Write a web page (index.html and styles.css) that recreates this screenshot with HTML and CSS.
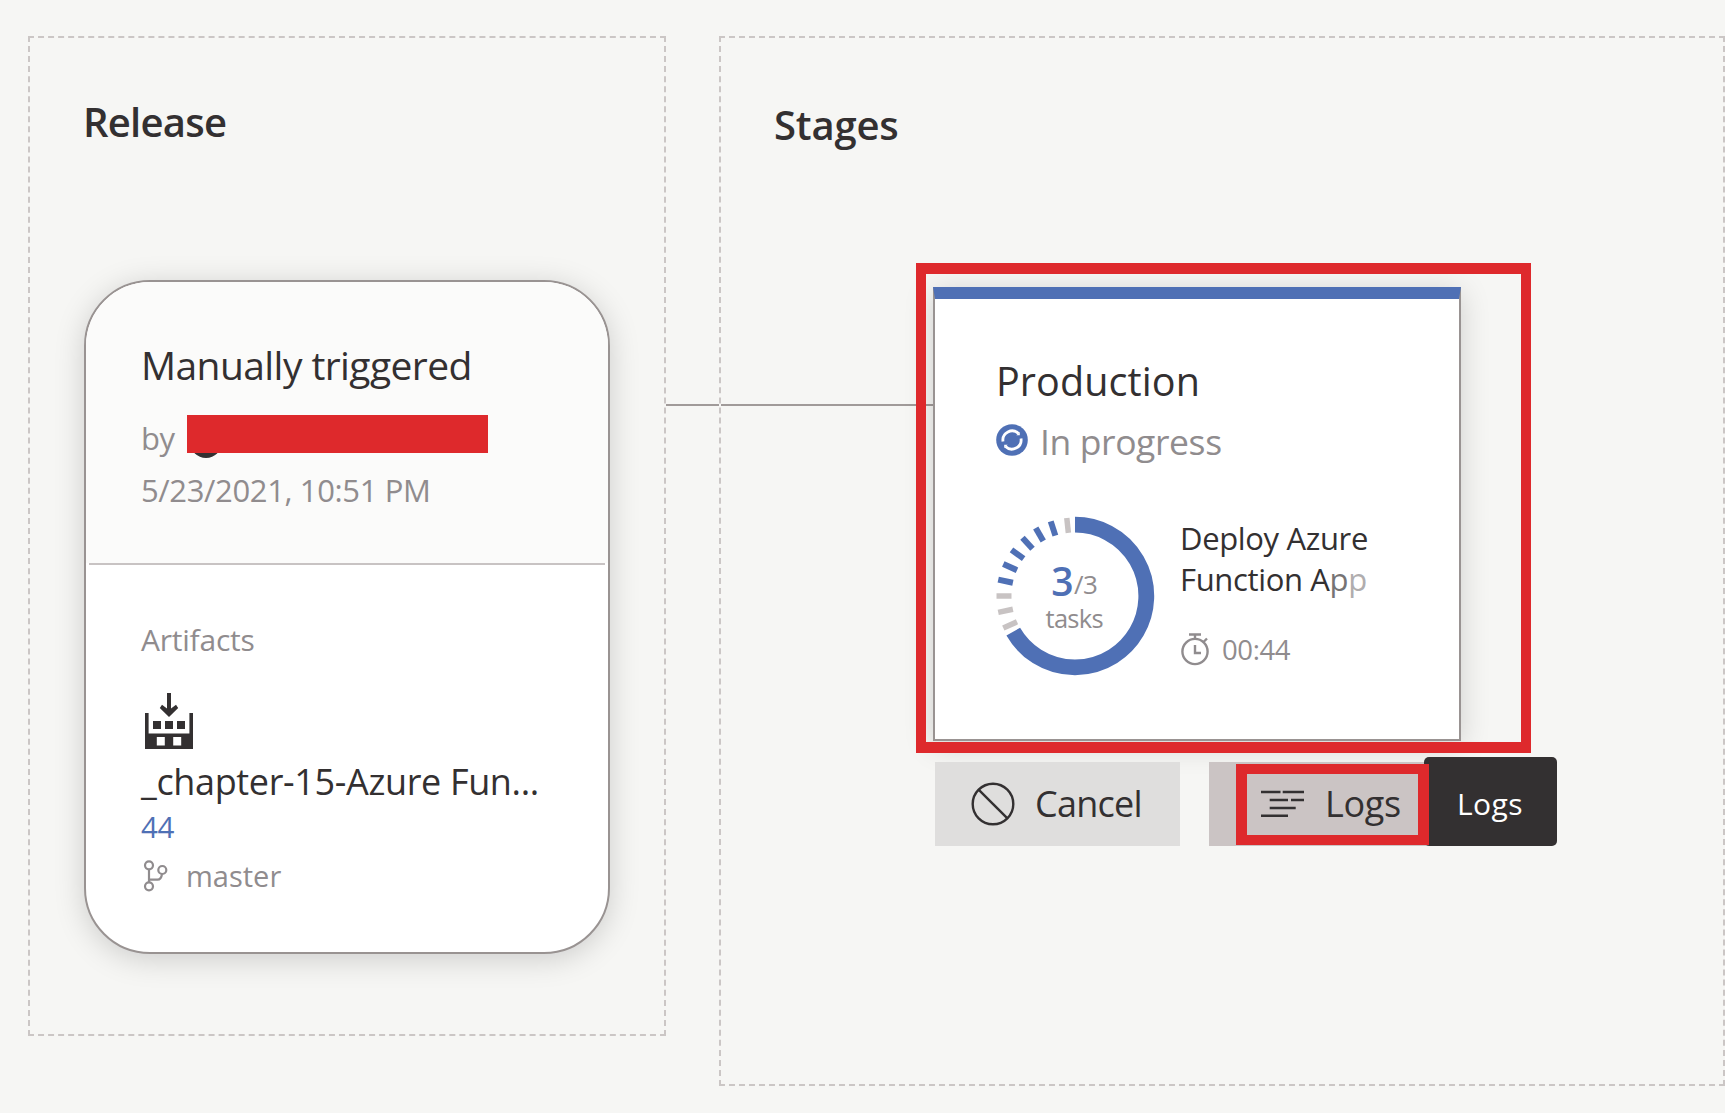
FILE: index.html
```html
<!DOCTYPE html>
<html lang="en">
<head>
<meta charset="utf-8">
<title>Release pipeline</title>
<link rel="stylesheet" href="styles.css">
</head>
<body>
<main class="pipeline">
  <section class="panel release">
    <h2 class="panel-title release-title">Release</h2>
    <article class="release-card">
      <div class="trigger">
        <h3 class="trigger-title">Manually triggered</h3>
        <div class="author"><span>by</span><span class="author-name"><i class="avatar"></i><i class="redaction"></i></span></div>
        <div class="date">5/23/2021, 10:51 PM</div>
      </div>
      <hr class="divider">
      <div class="artifacts">
        <div class="artifacts-label">Artifacts</div>
        <svg class="build-icon" width="48" height="56" viewBox="0 0 48 56">
          <path d="M0 20h3.6v20.5h40.8V20H48v36H0zM11.8 44v8.5h8V44zM28.2 44v8.5h8V44z" fill="#333031" fill-rule="evenodd"/>
          <path d="M8 28h8v8H8zM20 28h8v8h-8zM32 28h8v8h-8z" fill="#333031"/>
          <path d="M22 0h4v15.500l5-3.700 2.200 3.200L24 24l-9.200-9 2.200-3.200 5 3.700z" fill="#333031"/>
        </svg>
        <div class="artifact-name">_chapter-15-Azure Fun...</div>
        <a class="artifact-version">44</a>
        <div class="branch">
          <svg width="26" height="34" viewBox="0 0 26 34" fill="none" stroke="#908c8e" stroke-width="2.200">
            <circle cx="6" cy="6.300" r="4"/><circle cx="19.300" cy="11" r="4"/><circle cx="6" cy="27.300" r="4"/>
            <path d="M6 10.300v13M6 20.700h8.500c3 0 4-2 4.500-5.700"/>
          </svg>
          <span>master</span>
        </div>
      </div>
    </article>
  </section>
  <div class="link outer-link"></div>
  <section class="panel stages">
    <h2 class="panel-title stages-title">Stages</h2>
    <div class="stage-row">
      <div class="link inner-link"></div>
      <article class="stage-card">
        <h3 class="stage-title">Production</h3>
        <div class="status">
          <svg width="32" height="32" viewBox="0 0 32 32">
            <circle cx="16" cy="16" r="15.800" fill="#4f70b5"/>
            <g fill="none" stroke="#fff" stroke-width="2.800"><path d="M7 17.500A9.200 9.200 0 0 1 22.500 9.500"/><path d="M25 14.500A9.200 9.200 0 0 1 9.500 22.500"/></g>
            <path d="M23.800 8v3.300h-3.500zM8.200 24v-3.300h3.500z" fill="#fff"/>
          </svg>
          <span>In progress</span>
        </div>
        <div class="progress">
          <svg class="ring" width="160" height="160" viewBox="0 0 160 160">
            <path d="M80 8.700A71.300 71.300 0 1 1 18.250 115.650" fill="none" stroke="#4f70b5" stroke-width="15.800"/>
            <g stroke="#c8c3c3" stroke-width="5.500">
              <path d="M80 1.500v15" transform="rotate(-6 80 80)"/>
              <path d="M80 1.500v15" transform="rotate(-90 80 80)"/>
              <path d="M80 1.500v15" transform="rotate(-102 80 80)"/>
              <path d="M80 1.500v15" transform="rotate(-114 80 80)"/>
            </g>
            <g stroke="#4f70b5" stroke-width="6">
              <path d="M80 1.500v15" transform="rotate(-18 80 80)"/>
              <path d="M80 1.500v15" transform="rotate(-30 80 80)"/>
              <path d="M80 1.500v15" transform="rotate(-42 80 80)"/>
              <path d="M80 1.500v15" transform="rotate(-54 80 80)"/>
              <path d="M80 1.500v15" transform="rotate(-66 80 80)"/>
              <path d="M80 1.500v15" transform="rotate(-78 80 80)"/>
            </g>
            <text class="ring-done" x="56.300" y="80">3</text>
            <text class="ring-total" x="79" y="78">/3</text>
            <text class="ring-unit" x="50.500" y="111.500">tasks</text>
          </svg>
          <div class="task">
            <div class="task-name">Deploy Azure<br>Function A<span class="fade-1">p</span><span class="fade-2">p</span></div>
            <div class="timer">
              <svg width="30" height="34" viewBox="0 0 30 34" fill="none" stroke="#908c8e" stroke-width="2.400">
                <circle cx="15" cy="19.500" r="12.600"/><path d="M9 2.500h12M15 2.500v5M23.500 10l3.500-3.500M15 13v8h6"/>
              </svg>
              <span>00:44</span>
            </div>
          </div>
        </div>
      </article>
    </div>
    <div class="actions">
      <button class="action cancel">
        <svg width="44" height="44" viewBox="0 0 44 44" fill="none" stroke="#333031" stroke-width="2.400"><circle cx="22" cy="22" r="20.300"/><path d="M7.600 7.600l28.800 28.800"/></svg>
        <span>Cancel</span>
      </button>
      <button class="action logs">
        <svg width="44" height="30" viewBox="0 0 44 30" stroke="#333031" stroke-width="2.500"><path d="M0 3h19.500M21.700 3H43M8.700 11H27M30 11h13M8.700 19h26M0 26.700h27"/></svg>
        <span>Logs</span>
      </button>
    </div>
    <div class="tooltip">Logs</div>
    <div class="mark mark-stage"></div>
    <div class="mark mark-logs"></div>
  </section>
</main>
</body>
</html>
```

FILE: styles.css
```css
* { box-sizing: border-box; }
body {
  margin: 0;
  background: #f6f6f4;
  color: #333031;
  font-family: "Open Sans", "Noto Sans", sans-serif;
  overflow: hidden;
}
h2, h3 { margin: 0; font-weight: 400; }
svg { display: block; flex: none; }

.pipeline { display: flex; align-items: flex-start; width: 1725px; height: 1113px; padding: 36px 0 0 27.500px; }
.panel { border: 2px dashed #cbc6c5; }
.release { width: 638px; height: 1000px; padding: 57px 0 0 54.500px; }
.panel-title { font-weight: 600; font-size: 40px; line-height: 54px; white-space: nowrap; }
.release-title { margin-left: -1px; letter-spacing: -0.750px; }
.stages-title { margin-left: 53.500px; letter-spacing: -0.200px; }

.link { height: 2px; background: #a09a99; }
.outer-link { width: 53px; margin-top: 368px; }

.release-card {
  width: 526px;
  height: 674px;
  margin-top: 131px;
  border: 2px solid #999392;
  border-radius: 66px;
  background: #fff;
  box-shadow: 0 5px 30px rgba(0, 0, 0, .17);
  overflow: hidden;
}
.trigger { height: 281px; padding: 57px 0 0 55px; background: #fbfbfa; white-space: nowrap; }
.trigger-title { font-size: 39px; line-height: 52px; letter-spacing: -0.580px; }
.author { display: flex; gap: 13px; margin-top: 26px; font-size: 31px; line-height: 42px; color: #908c8e; }
.author > span:first-child { width: 33px; letter-spacing: -0.500px; }
.author-name { position: relative; width: 301px; }
.avatar { position: absolute; left: 3px; top: 9px; width: 32px; height: 32px; border-radius: 50%; background: #333031; }
.redaction { position: absolute; left: 0; top: -2px; width: 301px; height: 38px; background: #de292c; }
.date { margin-top: 10px; font-size: 31px; line-height: 42px; letter-spacing: -0.370px; color: #908c8e; }
.divider { height: 2px; margin: 0 3px; border: 0; background: #c8c3c3; }
.artifacts { padding: 55px 0 0 55px; white-space: nowrap; }
.artifacts-label { font-size: 30px; line-height: 40px; letter-spacing: -0.220px; color: #908c8e; }
.build-icon { margin: 33px 0 0 4px; }
.artifact-name { margin-top: 9px; font-size: 36px; line-height: 48px; letter-spacing: -0.350px; }
.artifact-version { display: block; margin-top: 1px; font-size: 29.500px; line-height: 40px; letter-spacing: -0.300px; color: #4f70b5; }
.branch { display: flex; gap: 17px; margin-top: 9px; font-size: 29px; line-height: 40px; color: #908c8e; }
.branch svg { margin: 3px 0 0 2px; }

.stages { position: relative; width: 1006.500px; height: 1050px; padding-top: 60px; }
.stage-row { display: flex; align-items: flex-start; margin-top: 135px; }
.inner-link { width: 212.500px; margin-top: 117px; }
.stage-card {
  width: 527.500px;
  height: 454px;
  padding: 55px 0 0 61px;
  border: 2px solid #999392;
  border-top: 12.500px solid #4f70b5;
  background: #fff;
  box-shadow: 0 5px 28px rgba(0, 0, 0, .16);
}
.stage-title { font-size: 39.500px; line-height: 54px; letter-spacing: 0.100px; }
.status { display: flex; gap: 12px; margin-top: 9px; font-size: 35.500px; line-height: 48px; letter-spacing: -0.400px; color: #908c8e; }
.status svg { margin: 7px 0 0; }
.progress { display: flex; margin: 51px 0 0 -1px; }
.ring-done { font-size: 39px; font-weight: 600; fill: #4f70b5; }
.ring-total { font-size: 26px; letter-spacing: -0.500px; fill: #908c8e; }
.ring-unit { font-size: 25.500px; letter-spacing: -0.700px; fill: #908c8e; }
.task { margin: 2px 0 0 25px; white-space: nowrap; }
.task-name { font-size: 31px; line-height: 41px; letter-spacing: -0.350px; }
.fade-1 { color: #767374; }
.fade-2 { color: #b0adae; }
.timer { display: flex; gap: 12px; margin-top: 31px; font-size: 27.500px; line-height: 38px; letter-spacing: -0.400px; color: #908c8e; }
.timer svg { margin: 1px 0 0; }

.actions { display: flex; gap: 29px; margin: 21px 0 0 214.500px; }
.action {
  display: flex;
  align-items: center;
  height: 84px;
  margin: 0;
  border: 0;
  font: 36px/48px "Open Sans", "Noto Sans", sans-serif;
  color: #333031;
}
.action span { margin-top: -1px; }
.cancel { width: 245px; padding: 0 0 0 36px; gap: 20px; background: #dfdedd; letter-spacing: -0.740px; }
.logs { width: 219px; padding: 0 0 0 52px; gap: 20px; background: #cbc4c4; letter-spacing: -0.330px; }
.tooltip {
  position: absolute;
  left: 703.500px;
  top: 719px;
  width: 133px;
  height: 89px;
  padding-left: 33px;
  border-radius: 5px;
  background: #333031;
  color: #fff;
  font-size: 30px;
  line-height: 93px;
  letter-spacing: 0.400px;
}
.mark { position: absolute; border: solid #de292c; }
.mark-stage { left: 195.500px; top: 225px; width: 615px; height: 490px; border-width: 11px 10px; }
.mark-logs { left: 515.500px; top: 726px; width: 193px; height: 81px; border-width: 10px 11px; }
```
